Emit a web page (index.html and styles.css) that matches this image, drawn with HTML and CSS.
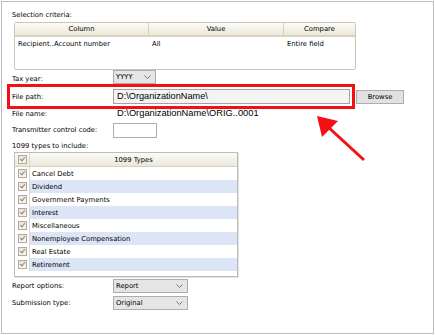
FILE: index.html
```html
<!DOCTYPE html>
<html lang="en">

<head>
    <meta charset="UTF-8">
    <meta name="viewport" content="width=device-width, initial-scale=1">
    <title>1099 Export</title>
    <link rel="stylesheet" href="styles.css">
</head>

<body>

    <div class="panel">
        <div class="caption">Selection criteria:</div>
        <div class="grid">
            <div class="grid-head">
                <div>Column</div>
                <div>Value</div>
                <div>Compare</div>
            </div>
            <div class="grid-row">
                <div>Recipient..Account number</div>
                <div>All</div>
                <div>Entire field</div>
            </div>
        </div>

        <div class="field field-year">
            <label>Tax year:</label>
            <div class="select select-year">
                <span>YYYY</span>
                <svg width="7" height="4" viewBox="0 0 7 4"><polyline points="0.5,0.5 3.5,3.5 6.5,0.5" fill="none" stroke="#777" stroke-width="1"/></svg>
            </div>
        </div>

        <div class="field field-path">
            <div class="highlight">
                <label>File path:</label>
                <div class="path-input">D:\OrganizationName\</div>
            </div>
            <button class="browse-btn">Browse</button>
        </div>

        <div class="field field-name">
            <label>File name:</label>
            <div class="file-name">D:\OrganizationName\ORIG..0001</div>
        </div>

        <div class="field field-code">
            <label>Transmitter control code:</label>
            <div class="code-input"></div>
        </div>

        <div class="caption caption-types">1099 types to include:</div>
        <div class="types">
            <div class="types-head">
                <div class="check-cell"><span class="checkbox"></span></div>
                <div class="name">1099 Types</div>
            </div>
            <div class="type-row">
                <div class="check-cell"><span class="checkbox"></span></div>
                <div class="name">Cancel Debt</div>
            </div>
            <div class="type-row alt">
                <div class="check-cell"><span class="checkbox"></span></div>
                <div class="name">Dividend</div>
            </div>
            <div class="type-row">
                <div class="check-cell"><span class="checkbox"></span></div>
                <div class="name">Government Payments</div>
            </div>
            <div class="type-row alt">
                <div class="check-cell"><span class="checkbox"></span></div>
                <div class="name">Interest</div>
            </div>
            <div class="type-row">
                <div class="check-cell"><span class="checkbox"></span></div>
                <div class="name">Miscellaneous</div>
            </div>
            <div class="type-row alt">
                <div class="check-cell"><span class="checkbox"></span></div>
                <div class="name">Nonemployee Compensation</div>
            </div>
            <div class="type-row">
                <div class="check-cell"><span class="checkbox"></span></div>
                <div class="name">Real Estate</div>
            </div>
            <div class="type-row alt">
                <div class="check-cell"><span class="checkbox"></span></div>
                <div class="name">Retirement</div>
            </div>
        </div>

        <div class="field field-report">
            <label>Report options:</label>
            <div class="select">
                <span>Report</span>
                <svg width="7" height="4" viewBox="0 0 7 4"><polyline points="0.5,0.5 3.5,3.5 6.5,0.5" fill="none" stroke="#777" stroke-width="1"/></svg>
            </div>
        </div>

        <div class="field field-submit">
            <label>Submission type:</label>
            <div class="select">
                <span>Original</span>
                <svg width="7" height="4" viewBox="0 0 7 4"><polyline points="0.5,0.5 3.5,3.5 6.5,0.5" fill="none" stroke="#777" stroke-width="1"/></svg>
            </div>
        </div>

        <svg class="annotation" width="435" height="335" viewBox="0 0 435 335">
            <line x1="364" y1="160" x2="327" y2="126" stroke="#f40f14" stroke-width="3"/>
            <polygon points="317,116 322,137 338,121" fill="#f40f14"/>
        </svg>
    </div>

</body>

</html>
```

FILE: styles.css
```css
body {
    margin: 0;
    font-family: "DejaVu Sans", sans-serif;
    font-size: 6.8px;
    color: #000;
    background-color: #fff;
}

.panel {
    position: relative;
    margin: 1px;
    width: 433px;
    height: 333px;
    box-sizing: border-box;
    border: 1px solid #bdbdbd;
    padding: 7px 0 0 10px;
}

.caption {
    height: 12px;
    line-height: 12px;
}

.grid {
    margin: 1px 0 0 2px;
    width: 342px;
    height: 48px;
    box-sizing: border-box;
    border: 1px solid #cbc7b7;
    border-radius: 2px;
}

.grid-head,
.grid-row {
    display: grid;
    grid-template-columns: 134px 135px 1fr;
}

.grid-head {
    height: 14px;
    box-sizing: border-box;
    background: linear-gradient(#fcfbf7, #ebe8da);
    border-bottom: 2px solid #d8d3bf;
}

.grid-head div {
    text-align: center;
    line-height: 12px;
    border-right: 1px solid #d3cfbf;
}

.grid-head div:last-child {
    border-right: none;
}

.grid-row div {
    padding: 2px 3px 0;
    line-height: 10px;
}

.field {
    display: flex;
    align-items: center;
    height: 14px;
}

.field label {
    width: 101px;
    flex-shrink: 0;
}

.field-year label {
    padding-top: 3px;
}

.select {
    display: flex;
    align-items: center;
    justify-content: space-between;
    width: 75px;
    height: 14px;
    box-sizing: border-box;
    border: 1px solid #adadad;
    background-color: #e5e5e5;
    padding: 0 4px 0 2px;
}

.select-year {
    width: 43px;
}

.field-path {
    height: 25px;
}

.highlight {
    display: flex;
    align-items: center;
    margin-left: -5px;
    width: 348px;
    height: 25px;
    box-sizing: border-box;
    border: 3px solid #f40f14;
    padding-left: 2px;
}

.path-input {
    width: 237px;
    height: 15px;
    box-sizing: border-box;
    border: 1px solid #a3a3a3;
    background-color: #f4f4f4;
    padding-left: 3px;
    font-family: "Liberation Sans", Arial, sans-serif;
    font-size: 9.2px;
    line-height: 13px;
}

.browse-btn {
    margin-left: 1px;
    width: 48px;
    height: 14px;
    padding: 0;
    border: 1px solid #adadad;
    background-color: #e1e1e1;
    font-family: "DejaVu Sans", sans-serif;
    font-size: 6.8px;
    color: #000;
}

.field-name {
    height: 9px;
}

.file-name {
    padding-left: 4px;
    font-family: "Liberation Sans", Arial, sans-serif;
    font-size: 9.3px;
    line-height: 9px;
}

.field-code {
    margin-top: 4px;
    height: 16px;
}

.code-input {
    width: 44px;
    height: 15px;
    box-sizing: border-box;
    border: 1px solid #abadb3;
    background-color: #fff;
}

.caption-types {
    margin-top: 3px;
    height: 10px;
    line-height: 10px;
}

.types {
    margin: 1px 0 0 2px;
    width: 224px;
    height: 125px;
    box-sizing: border-box;
    border: 1px solid #bcbcbc;
    box-shadow: 1px 1px 0 #e2e2e2;
}

.types-head,
.type-row {
    display: flex;
}

.types-head {
    height: 14px;
    box-sizing: border-box;
    background: linear-gradient(#fcfbf7, #ebe8da);
    border-bottom: 1px solid #d6d1be;
}

.type-row {
    height: 13px;
}

.check-cell {
    display: flex;
    align-items: center;
    justify-content: center;
    width: 14px;
    flex-shrink: 0;
    border-right: 1px solid #dcd8cb;
}

.name {
    flex: 1;
    padding-left: 2px;
    display: flex;
    align-items: center;
}

.types-head .name {
    justify-content: center;
    padding-left: 0;
}

.type-row.alt .name {
    background-color: #dbe5f6;
}

.checkbox {
    position: relative;
    width: 9px;
    height: 9px;
    box-sizing: border-box;
    border: 1px solid #b3a999;
    background: linear-gradient(#e6e4de, #f8f7f4);
}

.checkbox::after {
    content: "";
    position: absolute;
    left: 2px;
    top: 0px;
    width: 2px;
    height: 4px;
    border-right: 1px solid #8f8473;
    border-bottom: 1px solid #8f8473;
    transform: rotate(40deg);
}

.field-report {
    margin-top: 2px;
}

.field-submit {
    margin-top: 3px;
}

.annotation {
    position: absolute;
    left: -2px;
    top: -2px;
    pointer-events: none;
}
```
